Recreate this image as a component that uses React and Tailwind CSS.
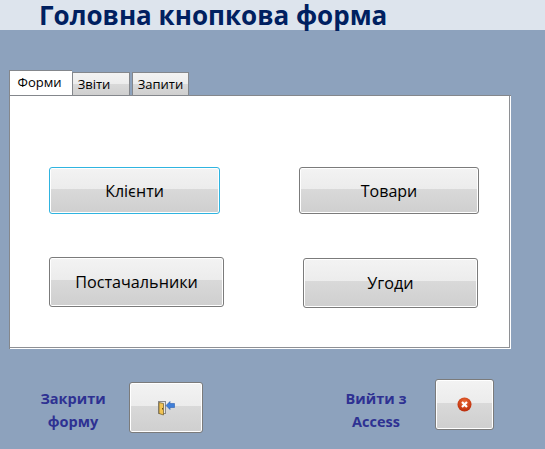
const btnBase = "flex items-center justify-center rounded-[3px] border shadow-[inset_0_0_0_1px_#ffffff] bg-[linear-gradient(180deg,#f3f3f3_0%,#ececec_46%,#d9d9d9_46%,#cfcfcf_100%)]";
const grayEdge = "border-[#7b7b7b]";
const face = { fontFamily: '"Open Sans","Noto Sans",sans-serif' };

function DoorIcon() {
  return (
    <svg width="17" height="16" viewBox="0 0 17 16">
      <rect x="0.5" y="1.5" width="7" height="12" fill="#e6e6e6" stroke="#8a8a8a" />
      <path d="M1 2.5 L5.5 3.5 V15 L1 13.5 Z" fill="#f2c453" stroke="#6d5a2a" strokeWidth="0.7" />
      <rect x="4" y="8" width="1" height="1.5" fill="#6d4c10" />
      <path d="M16.5 3.5 H12 V1.5 L8 5.5 L12 9.5 V7.5 H16.5 Z" fill="#3f7fd9" stroke="#2b5fb0" strokeWidth="0.6" />
    </svg>
  );
}

function CloseIcon() {
  return (
    <svg width="15" height="15" viewBox="0 0 15 15">
      <defs>
        <radialGradient id="r" cx="50%" cy="35%" r="65%">
          <stop offset="0%" stopColor="#f0703a" />
          <stop offset="100%" stopColor="#b92a08" />
        </radialGradient>
      </defs>
      <circle cx="7.5" cy="7.5" r="7" fill="url(#r)" />
      <path d="M5 5 L10 10 M10 5 L5 10" stroke="#ffffff" strokeWidth="2.2" />
    </svg>
  );
}

function Tab({ children, className }) {
  return (
    <div className={`flex items-center justify-center h-[23px] pt-[1px] border border-b-0 border-[#84878c] text-[13px] text-black bg-[linear-gradient(180deg,#f3f3f3_0%,#ececec_50%,#d9d9d9_50%,#cfcfcf_100%)] ${className}`}>
      {children}
    </div>
  );
}

export default function App() {
  return (
    <div className="w-[545px] h-[449px] overflow-hidden bg-[#8da2bd] flex flex-col" style={face}>
      <div className="h-[30px] bg-[#dde4ed] pl-[39px] flex items-center">
        <h1 className="text-[26px] leading-[30px] font-bold text-[#002060] whitespace-nowrap">Головна кнопкова форма</h1>
      </div>

      <div className="pl-[9px] pt-[40px]">
        <div className="flex items-end h-[25px]">
          <div className="w-[63px] h-[25px] bg-white border-l border-t border-[#84878c] text-[13px] text-black flex items-center justify-center pb-[1px] pr-[3px]">Форми</div>
          <Tab className="w-[58px] mr-[2px] pr-[14px]">Звіти</Tab>
          <Tab className="w-[57px] text-[12.5px]">Запити</Tab>
        </div>
        <div className="w-[502px] h-[254px] bg-white border-l border-t border-[#84878c] shadow-[inset_-1px_-1px_0_0_#ffffff,inset_-2px_-2px_0_0_#8e9094] flex flex-col">
          <div className="flex pl-[39px] pt-[71px]">
            <div className={`${btnBase} border-[#2fb4e0] w-[171px] h-[47px] text-[16px] text-black`}>Клієнти</div>
            <div className={`${btnBase} ${grayEdge} w-[180px] h-[47px] ml-[79px] text-[16px] text-black`}>Товари</div>
          </div>
          <div className="flex pl-[39px] pt-[43px]">
            <div className={`${btnBase} ${grayEdge} w-[175px] h-[50px] text-[16.2px] text-black`}>Постачальники</div>
            <div className={`${btnBase} ${grayEdge} w-[175px] h-[50px] ml-[79px] mt-[1px] text-[16.2px] text-black`}>Угоди</div>
          </div>
        </div>
      </div>

      <div className="flex pt-[30px] font-bold text-[#2e3192] text-[14.5px] leading-[23px]">
        <div className="w-[146px] pt-[8px] text-center">Закрити<br />форму</div>
        <div className={`${btnBase} ${grayEdge} w-[74px] h-[51px] ml-[-17px] mt-[3px]`}><DoorIcon /></div>
        <div className="w-[102px] ml-[122px] pt-[8px] text-center">Вийти з<br />Access</div>
        <div className={`${btnBase} ${grayEdge} w-[59px] h-[51px] ml-[8px]`}><CloseIcon /></div>
      </div>
    </div>
  );
}
